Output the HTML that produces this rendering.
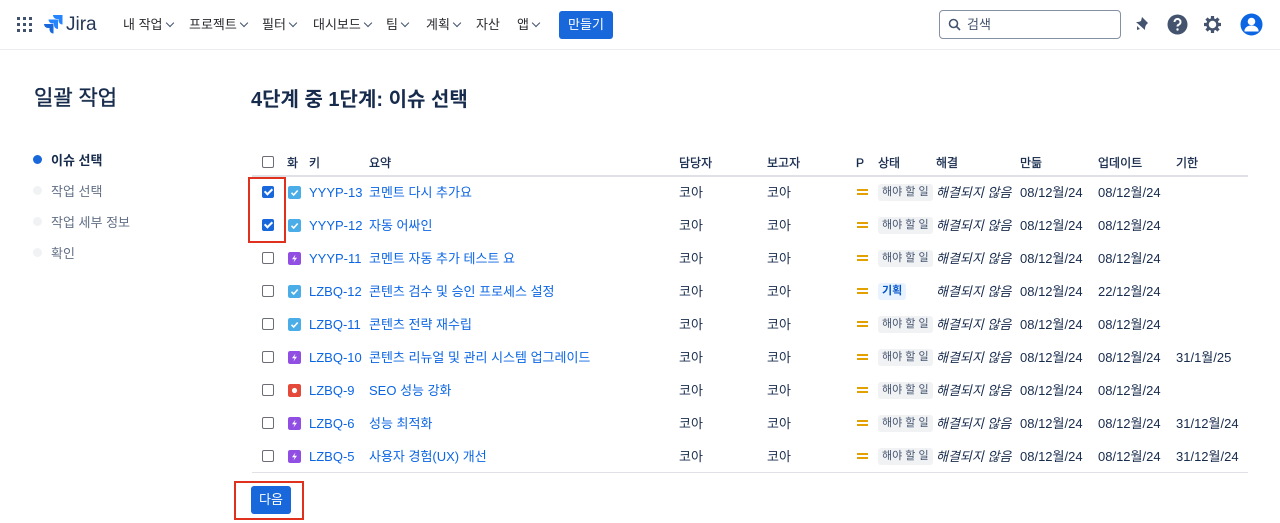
<!DOCTYPE html>
<html><head><meta charset="utf-8">
<style>
*{margin:0;padding:0;box-sizing:border-box}
body{width:1280px;height:523px;overflow:hidden;background:#fff;font-family:"Liberation Sans","Noto Sans CJK KR",sans-serif;color:#172b4d;font-size:13px;position:relative}
.a{position:absolute;white-space:nowrap;line-height:16px}
.nav{position:absolute;left:0;top:0;width:1280px;height:50px;border-bottom:1px solid #ebecf0}
.ni{position:absolute;top:17px;font-size:13px;color:#292a2e;line-height:16px}
.ch{display:inline-block;width:6px;height:6px;border-right:1.5px solid #42526e;border-bottom:1.5px solid #42526e;transform:rotate(45deg);margin-left:4px;position:relative;top:-3px}
.cb{position:absolute;width:12px;height:12px;border:1.5px solid #6b6e76;border-radius:2px;background:#fff}
.cb.on{background:#1868db;border-color:#1868db}
.cb.on:after{content:"";position:absolute;left:3px;top:0px;width:3px;height:6px;border-right:2px solid #fff;border-bottom:2px solid #fff;transform:rotate(45deg)}
.ic{position:absolute;width:13px;height:13px;border-radius:2px}
.k{color:#0c66e4}
.lz{position:absolute;font-size:11px;padding:0 4px;border-radius:3px;background:#f1f2f4;color:#44546f;height:17px;line-height:17px}
.it{font-style:italic}
.th{font-size:12px;font-weight:normal;color:#172b4d;-webkit-text-stroke:0.3px #172b4d}
.pri{position:absolute;width:11px;height:6px;border-top:2px solid #e2a100;border-bottom:2px solid #e2a100}
</style></head><body>
<div class="nav">
<svg class="a" style="left:17px;top:17px" width="15" height="15" viewBox="0 0 15 15" fill="#42526e"><rect x="0" y="0" width="3" height="3"/><rect x="6" y="0" width="3" height="3"/><rect x="12" y="0" width="3" height="3"/><rect x="0" y="6" width="3" height="3"/><rect x="6" y="6" width="3" height="3"/><rect x="12" y="6" width="3" height="3"/><rect x="0" y="12" width="3" height="3"/><rect x="6" y="12" width="3" height="3"/><rect x="12" y="12" width="3" height="3"/></svg>
<svg class="a" style="left:43px;top:14px" width="20" height="21" viewBox="0 0 20 21"><path d="M19 1H10a4 4 0 0 0 4 4h1.5v1.5a4 4 0 0 0 4 4V1z" fill="#2684ff"/><path d="M14.5 5.5H5.5a4 4 0 0 0 4 4H11V11a4 4 0 0 0 4 4V5.5z" fill="#2684ff"/><path d="M10 10H1a4 4 0 0 0 4 4h1.5v1.5a4 4 0 0 0 4 4V10z" fill="#1868db"/></svg>
<div class="a" style="left:66px;top:14px;font-size:19px;line-height:22px;color:#253858">Jira</div>
<div class="ni" style="left:123px">내 작업<span class="ch"></span></div>
<div class="ni" style="left:189px">프로젝트<span class="ch"></span></div>
<div class="ni" style="left:262px">필터<span class="ch"></span></div>
<div class="ni" style="left:313px">대시보드<span class="ch"></span></div>
<div class="ni" style="left:386px">팀<span class="ch"></span></div>
<div class="ni" style="left:426px">계획<span class="ch"></span></div>
<div class="ni" style="left:476px">자산</div>
<div class="ni" style="left:517px">앱<span class="ch"></span></div>
<div class="a" style="left:559px;top:11px;width:54px;height:28px;background:#1868db;border-radius:3px;color:#fff;font-size:13px;text-align:center;line-height:28px">만들기</div>
<div class="a" style="left:939px;top:10px;width:182px;height:29px;border:1px solid #8590a2;border-radius:4px"></div>
<svg class="a" style="left:948px;top:18px" width="13" height="13" viewBox="0 0 13 13"><circle cx="5.5" cy="5.5" r="4" fill="none" stroke="#44546f" stroke-width="1.6"/><path d="M8.5 8.5L12 12" stroke="#44546f" stroke-width="1.6"/></svg>
<div class="a" style="left:967px;top:17px;color:#44546f">검색</div>
<svg class="a" style="left:1133px;top:16px" width="17" height="17" viewBox="0 0 17 17"><path d="M9 1l6 6-2 2c-1 2-1 3-1 5L3 6c2 0 3 0 5-1z" fill="#44546f"/><path d="M4 10l3 3-3 1z" fill="#44546f"/></svg>
<svg class="a" style="left:1167px;top:14px" width="21" height="21" viewBox="0 0 21 21"><circle cx="10.5" cy="10.5" r="10" fill="#44546f"/><path d="M7.5 8a3 3 0 1 1 4 2.8c-.8.4-1 .8-1 1.7" fill="none" stroke="#fff" stroke-width="2"/><circle cx="10.5" cy="15.5" r="1.2" fill="#fff"/></svg>
<svg class="a" style="left:1203px;top:15px" width="19" height="19" viewBox="0 0 19 19"><circle cx="9.5" cy="9.5" r="5" fill="none" stroke="#44546f" stroke-width="2.5"/><g stroke="#44546f" stroke-width="3.2"><path d="M9.5 1v3M9.5 15v3M1 9.5h3M15 9.5h3M3.5 3.5l2 2M13.5 13.5l2 2M3.5 15.5l2-2M13.5 5.5l2-2"/></g></svg>
<svg class="a" style="left:1240px;top:13px" width="23" height="23" viewBox="0 0 23 23"><circle cx="11.5" cy="11.5" r="11" fill="#0c66e4"/><circle cx="11.5" cy="8.5" r="3.8" fill="#fff"/><path d="M4.5 17c1-3 3.5-4.5 7-4.5s6 1.5 7 4.5v1.5h-14z" fill="#fff"/></svg>
</div>

<div class="a" style="left:34px;top:87px;font-size:21px;line-height:24px;color:#172b4d;-webkit-text-stroke:0.4px #172b4d">일괄 작업</div>
<div class="a" style="left:33px;top:155px;width:9px;height:9px;border-radius:50%;background:#1868db"></div>
<div class="a" style="left:51px;top:153px;font-weight:bold">이슈 선택</div>
<div class="a" style="left:33px;top:186px;width:9px;height:9px;border-radius:50%;background:#f1f2f4"></div>
<div class="a" style="left:51px;top:184px;color:#626f86">작업 선택</div>
<div class="a" style="left:33px;top:217px;width:9px;height:9px;border-radius:50%;background:#f1f2f4"></div>
<div class="a" style="left:51px;top:215px;color:#626f86">작업 세부 정보</div>
<div class="a" style="left:33px;top:248px;width:9px;height:9px;border-radius:50%;background:#f1f2f4"></div>
<div class="a" style="left:51px;top:246px;color:#626f86">확인</div>

<div class="a" style="left:251px;top:88px;font-size:20px;line-height:24px;font-weight:bold;color:#172b4d">4단계 중 1단계: 이슈 선택</div>

<div class="cb" style="left:262px;top:156px"></div>
<div class="a th" style="left:287px;top:155px">화</div>
<div class="a th" style="left:309px;top:155px">키</div>
<div class="a th" style="left:369px;top:155px">요약</div>
<div class="a th" style="left:679px;top:155px">담당자</div>
<div class="a th" style="left:767px;top:155px">보고자</div>
<div class="a th" style="left:856px;top:155px">P</div>
<div class="a th" style="left:878px;top:155px">상태</div>
<div class="a th" style="left:936px;top:155px">해결</div>
<div class="a th" style="left:1020px;top:155px">만듦</div>
<div class="a th" style="left:1098px;top:155px">업데이트</div>
<div class="a th" style="left:1176px;top:155px">기한</div>
<div class="a" style="left:252px;top:175px;width:996px;height:2px;background:#dfe1e6"></div>
<div class="a" style="left:252px;top:472px;width:996px;height:1px;background:#dfe1e6"></div>

<div id="rows"></div>
<script>
var R=[
["on","t","YYYP-13","코멘트 다시 추가요","","08/12월/24",""],
["on","t","YYYP-12","자동 어싸인","","08/12월/24",""],
["","e","YYYP-11","코멘트 자동 추가 테스트 요","","08/12월/24",""],
["","t","LZBQ-12","콘텐츠 검수 및 승인 프로세스 설정","p","22/12월/24",""],
["","t","LZBQ-11","콘텐츠 전략 재수립","","08/12월/24",""],
["","e","LZBQ-10","콘텐츠 리뉴얼 및 관리 시스템 업그레이드","","08/12월/24","31/1월/25"],
["","b","LZBQ-9","SEO 성능 강화","","08/12월/24",""],
["","e","LZBQ-6","성능 최적화","","08/12월/24","31/12월/24"],
["","e","LZBQ-5","사용자 경험(UX) 개선","","08/12월/24","31/12월/24"]];
var h="";
R.forEach(function(r,i){var c=192+33*i,t=c-7;
h+='<div class="cb '+r[0]+'" style="left:262px;top:'+(c-6)+'px"></div>';
var bg=r[1]=="t"?"#4bade8":r[1]=="e"?"#904ee2":"#e5493a";
var g=r[1]=="t"?'<path d="M3.5 6.8l2.2 2.2 4-4.5" fill="none" stroke="#fff" stroke-width="1.6"/>':r[1]=="e"?'<path d="M7.5 2.5L4 7.3h2.6L5.5 10.5 9 5.7H6.4z" fill="#fff"/>':'<circle cx="6.5" cy="6.5" r="2.6" fill="#fff"/>';
h+='<svg class="ic" style="left:288px;top:'+(c-6)+'px" width="13" height="13" viewBox="0 0 13 13"><rect width="13" height="13" rx="2" fill="'+bg+'"/>'+g+'</svg>';
h+='<div class="a k" style="left:309px;top:'+t+'px">'+r[2]+'</div>';
h+='<div class="a k" style="left:369px;top:'+t+'px">'+r[3]+'</div>';
h+='<div class="a" style="left:679px;top:'+t+'px">코아</div><div class="a" style="left:767px;top:'+t+'px">코아</div>';
h+='<div class="pri" style="left:857px;top:'+(c-3)+'px"></div>';
if(r[4]=="p")h+='<div class="lz" style="left:878px;top:'+(c-8)+'px;background:#e9f2ff;color:#0055cc;font-weight:bold">기획</div>';
else h+='<div class="lz" style="left:878px;top:'+(c-8)+'px">해야 할 일</div>';
h+='<div class="a it" style="left:936px;top:'+t+'px">해결되지 않음</div>';
h+='<div class="a" style="left:1020px;top:'+t+'px">08/12월/24</div><div class="a" style="left:1098px;top:'+t+'px">'+r[5]+'</div><div class="a" style="left:1176px;top:'+t+'px">'+r[6]+'</div>';
});
document.getElementById("rows").innerHTML=h;
</script>

<div class="a" style="left:248px;top:177px;width:38px;height:66px;border:2px solid #e0301e"></div>
<div class="a" style="left:251px;top:486px;width:40px;height:28px;background:#1868db;border-radius:3px;color:#fff;text-align:center;line-height:28px">다음</div>
<div class="a" style="left:234px;top:481px;width:70px;height:39px;border:2px solid #e0301e"></div>
</body></html>
